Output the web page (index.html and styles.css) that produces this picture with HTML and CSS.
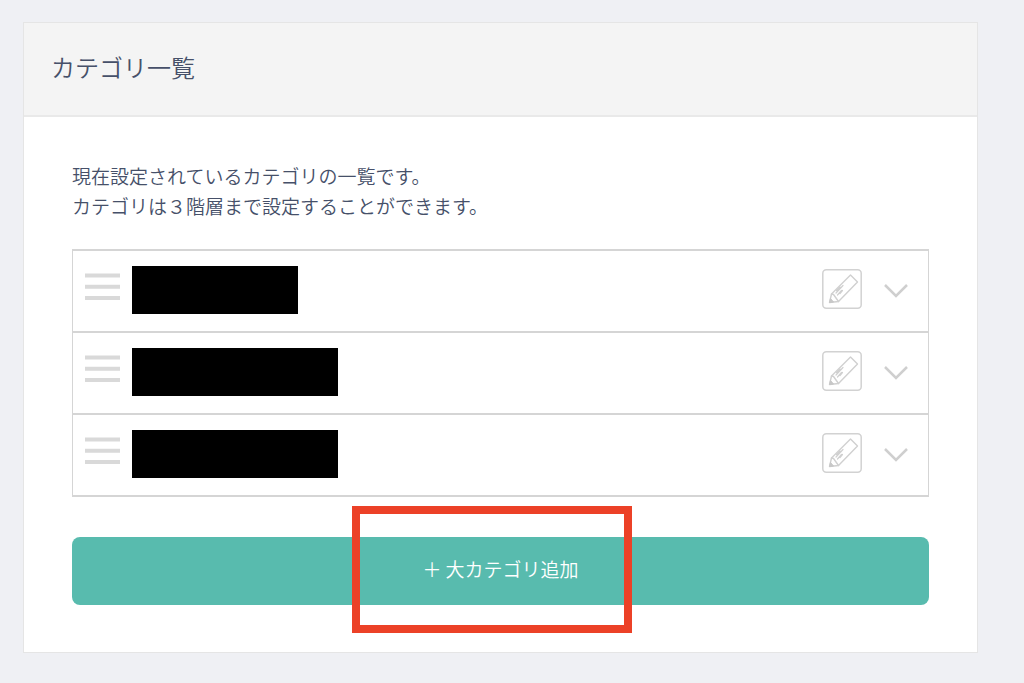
FILE: index.html
```html
<!DOCTYPE html>
<html lang="ja">
<head>
<meta charset="UTF-8" />
<meta name="viewport" content="width=device-width, initial-scale=1" />
<title>カテゴリ一覧</title>
<link rel="stylesheet" href="styles.css">
</head>
<body>

<svg width="0" height="0" class="defs" aria-hidden="true">
  <symbol id="icon-handle" viewBox="0 0 36 28">
    <path d="M0 2.5h35M0 13.8h35M0 25h35" fill="none" stroke="#d9d9d9" stroke-width="4" />
  </symbol>
  <symbol id="icon-pencil" viewBox="0 0 40 40">
    <rect x="0.8" y="0.8" width="38.4" height="38.4" rx="3.5" fill="none" stroke="#d2d2d2" stroke-width="1.5" />
    <g fill="none" stroke="#d0d0d0" stroke-width="1.4" stroke-linejoin="round" stroke-linecap="round">
      <path d="M28.500 6L35.500 13L16.500 32.500L7.500 33.500L9.500 25Z" />
      <path d="M9.500 25L11.500 25.500L16.500 32.500" />
      <path d="M14 24L21 16.500M15.500 26L19.500 21.500M14.500 21.500L18 18M18 24.500L20.500 21.500" stroke-width="1.2" />
    </g>
    <path d="M8.500 29.500L11.500 33L7.500 33.500Z" fill="#c8c8c8" stroke="#c8c8c8" />
  </symbol>
  <symbol id="icon-chevron" viewBox="0 0 24 16">
    <path d="M1 2L12 13L23 2" fill="none" stroke="#cfcfcf" stroke-width="2.500" />
  </symbol>
</svg>

<main class="card">
  <header class="card-header">
    <h1>カテゴリ一覧</h1>
  </header>

  <div class="card-body">
    <p class="lead">現在設定されているカテゴリの一覧です。<br>カテゴリは３階層まで設定することができます。</p>

    <!-- カテゴリ -->
    <ul class="category-list">
      <li>
        <svg class="handle"><use href="#icon-handle" /></svg>
        <span class="name name-short"></span>
        <button type="button" class="edit" aria-label="編集"><svg><use href="#icon-pencil" /></svg></button>
        <button type="button" class="toggle" aria-label="開く"><svg><use href="#icon-chevron" /></svg></button>
      </li>
      <li>
        <svg class="handle"><use href="#icon-handle" /></svg>
        <span class="name"></span>
        <button type="button" class="edit" aria-label="編集"><svg><use href="#icon-pencil" /></svg></button>
        <button type="button" class="toggle" aria-label="開く"><svg><use href="#icon-chevron" /></svg></button>
      </li>
      <li>
        <svg class="handle"><use href="#icon-handle" /></svg>
        <span class="name"></span>
        <button type="button" class="edit" aria-label="編集"><svg><use href="#icon-pencil" /></svg></button>
        <button type="button" class="toggle" aria-label="開く"><svg><use href="#icon-chevron" /></svg></button>
      </li>
    </ul>

    <!-- 追加ボタン -->
    <div class="add">
      <button type="button" class="add-btn">＋ 大カテゴリ追加</button>
      <div class="highlight"></div>
    </div>
  </div>
</main>

</body>
</html>
```
FILE: styles.css
```css
* { box-sizing: border-box; }
body {
  margin: 0; padding: 22px 46px 30px 23px; background: #eff0f4; color: #465069;
  font-family: "Noto Sans CJK JP", sans-serif; font-size: 19px; font-weight: 350; line-height: 30px;
}
button { margin: 0; padding: 0; border: none; background: none; font: inherit; cursor: pointer; }
svg { display: block; width: 100%; height: 100%; }
.defs { position: absolute; width: 0; height: 0; }

.card { background: white; border: 1px solid #e5e5e5; }
.card-header { padding: 28px 27px 32px; background: #f4f4f4; border-bottom: 2px solid #e9e9e9; }
.card-header h1 { margin: 0; font-size: 24px; font-weight: inherit; line-height: 32px; }
.card-body { padding: 44px 48px 47px; }
.lead { margin: 0 0 28px; }

.category-list { margin: 0; padding: 0; list-style: none; border: 2px solid #d5d5d5; border-width: 2px 1px; }
.category-list li { display: flex; align-items: center; height: 82px; padding: 0 20px 0 12px; border-bottom: 2px solid #d5d5d5; }
.category-list li:last-child { height: 80px; border-bottom: none; }
.handle { width: 36px; height: 28px; margin: 0 11px 8px 0; }
.name { width: 206px; height: 48px; margin: 0 auto 2px 0; background: black; }
.name-short { width: 166px; }
.edit { width: 40px; height: 40px; margin: 0 22px 4px 0; }
.toggle { width: 24px; height: 16px; }

.add { position: relative; margin-top: 40px; }
.add-btn {
  display: block; width: 100%; height: 68px; padding-bottom: 4px; background: #58bbae; color: white;
  border-radius: 8px;
}
.add-btn:hover { background: #4dada0; }
.highlight {
  position: absolute; top: -31px; left: calc(50% - 149px); width: 280px; height: 127px;
  border: 8px solid #ec4127; pointer-events: none;
}
```
